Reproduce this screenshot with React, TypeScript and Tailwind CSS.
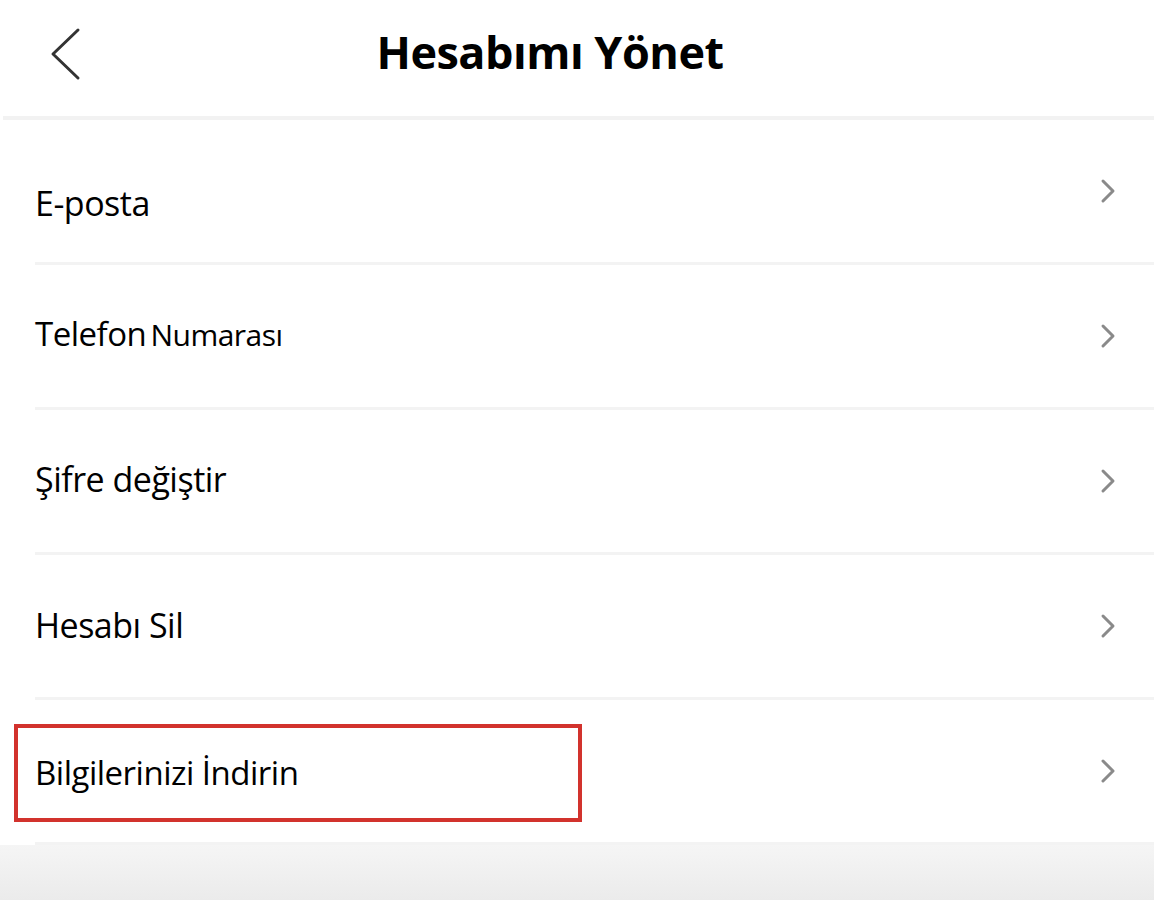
import React from 'react';

const Chevron = () => (
  <svg width="20" height="32" viewBox="0 0 20 32" fill="none" className="shrink-0">
    <path d="M5 6 L15 16 L5 26" stroke="#8a8a8a" strokeWidth="3" strokeLinecap="round" strokeLinejoin="round" />
  </svg>
);

const Row = ({ children, textCls = '', highlight = false }: { children: React.ReactNode; textCls?: string; highlight?: boolean }) => (
  <div className="h-[145px] flex flex-col">
    <div className="flex-1 flex items-center justify-between pl-[35px] pr-[36px]">
      {highlight ? (
        <div className="-ml-[21px] w-[568px] h-[98px] border-4 border-[#d2322d] flex items-center pl-[17px] mt-[4px]">
          {children}
        </div>
      ) : (
        <div className={textCls}>{children}</div>
      )}
      <Chevron />
    </div>
    <div className="ml-[35px] h-[3px] bg-[#f3f3f3]" />
  </div>
);

export default function App() {
  return (
    <div className="w-[1154px] h-[900px] bg-white flex flex-col text-black" style={{ fontFamily: '"Open Sans", "Noto Sans", sans-serif' }}>
      <div className="h-[116px] flex items-center relative">
        <svg width="40" height="60" viewBox="0 0 40 60" fill="none" className="ml-[44px] -mt-[4px]">
          <path d="M34 4 L9 28 L34 52" stroke="#333" strokeWidth="3" strokeLinecap="round" strokeLinejoin="round" />
        </svg>
        <h1 className="absolute left-0 right-0 text-center font-bold text-[45px] -mt-[12px] pr-[54px] tracking-[-0.5px] pointer-events-none">
          Hesabımı Yönet
        </h1>
      </div>
      <div className="ml-[3px] h-[4px] bg-[#f2f2f2]" />
      <Row textCls="mt-[24px]">
        <span className="text-[34px] tracking-[-0.5px]">E-posta</span>
      </Row>
      <Row textCls="-mt-[4px]">
        <span className="text-[33px] tracking-[-0.5px]">Telefon</span>{' '}
        <span className="text-[30px] tracking-[-0.5px]">Numarası</span>
      </Row>
      <Row textCls="-mt-[4px]">
        <span className="text-[34px] tracking-[-0.5px]">Şifre değiştir</span>
      </Row>
      <Row textCls="-mt-[2px]">
        <span className="text-[34px] tracking-[-0.5px]">Hesabı Sil</span>
      </Row>
      <Row highlight>
        <span className="text-[33px] tracking-[-0.5px]">Bilgilerinizi İndirin</span>
      </Row>
      <div className="flex-1 bg-gradient-to-b from-[#f5f5f5] to-[#ebebeb]" />
    </div>
  );
}
